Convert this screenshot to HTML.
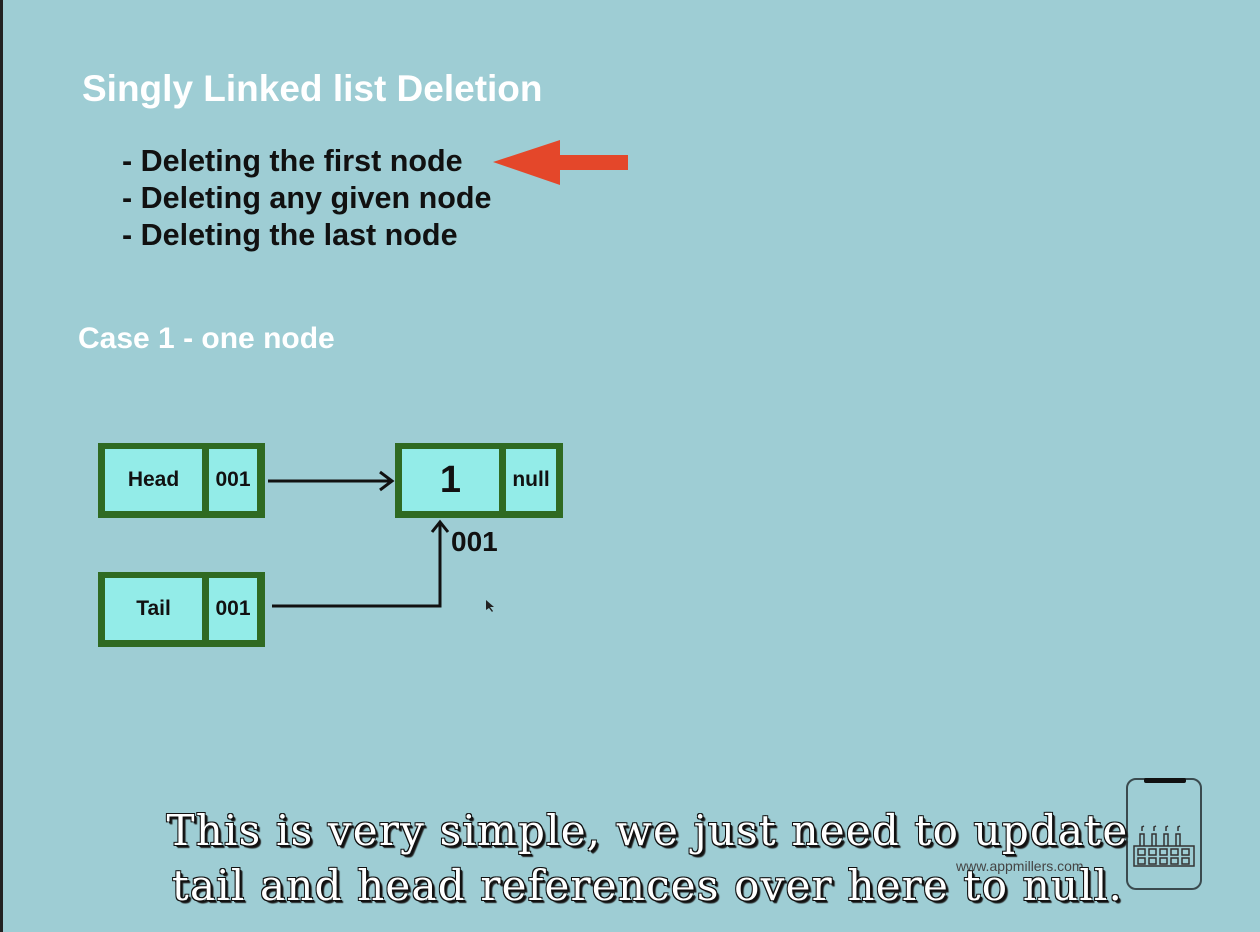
<!DOCTYPE html>
<html><head><meta charset="utf-8"><style>
html,body{margin:0;padding:0}
body{width:1260px;height:932px;background:#9ecdd4;position:relative;overflow:hidden;font-family:"Liberation Sans",Arial,sans-serif}
.t{position:absolute;font-weight:bold;white-space:nowrap}
.box{position:absolute;background:#2f6a22;}
.cell{position:absolute;background:#93ece8;display:flex;align-items:center;justify-content:center;font-weight:bold;color:#111;font-size:21px}
.sub{position:absolute;left:0;width:1295px;text-align:center;font-family:"DejaVu Serif","Liberation Serif",serif;font-size:42px;color:#fff;white-space:nowrap;letter-spacing:1.2px;
text-shadow:2px 2px 0 #111,-1px -1px 0 #111,1px -1px 0 #111,-1px 1px 0 #111,3px 3px 1px #222}
</style></head><body>
<div style="position:absolute;left:0;top:0;width:3px;height:932px;background:#222"></div>
<div class="t" style="left:82px;top:68px;font-size:37px;color:#fff">Singly Linked list Deletion</div>
<div class="t" style="left:122px;top:143px;font-size:30.5px;color:#111;line-height:37px">- Deleting the first node<br>- Deleting any given node<br>- Deleting the last node</div>
<div class="t" style="left:78px;top:322px;font-size:30px;color:#fff">Case 1 - one node</div>
<svg style="position:absolute;left:0;top:0" width="1260" height="932">
<polygon points="493,162 560,140 560,155 628,155 628,170 560,170 560,185" fill="#e4472a"/>
<g stroke="#111" stroke-width="3" fill="none">
<line x1="268" y1="481" x2="392" y2="481"/><polyline points="380,472 392,481 380,490"/>
<polyline points="272,606 440,606 440,522"/><polyline points="432,532 440,522 448,532"/>
</g>
<polygon points="486,600 486,610 489,608 492,612 493,611 490,607 494,607" fill="#222"/>
</svg>
<div class="box" style="left:98px;top:443px;width:167px;height:75px"></div>
<div class="cell" style="left:105px;top:449px;width:97px;height:62px">Head</div>
<div class="cell" style="left:209px;top:449px;width:48px;height:62px">001</div>
<div class="box" style="left:98px;top:572px;width:167px;height:75px"></div>
<div class="cell" style="left:105px;top:578px;width:97px;height:62px">Tail</div>
<div class="cell" style="left:209px;top:578px;width:48px;height:62px">001</div>
<div class="box" style="left:395px;top:443px;width:168px;height:75px"></div>
<div class="cell" style="left:402px;top:449px;width:97px;height:62px;font-size:38px">1</div>
<div class="cell" style="left:506px;top:449px;width:50px;height:62px">null</div>
<div class="t" style="left:451px;top:526px;font-size:28px;color:#111">001</div>
<div style="position:absolute;left:1126px;top:778px;width:76px;height:112px;border:2px solid #3a4a4e;border-radius:10px;box-sizing:border-box"></div>
<div style="position:absolute;left:1144px;top:778px;width:42px;height:5px;background:#111;border-radius:2px"></div>
<svg style="position:absolute;left:1130px;top:820px" width="70" height="50" fill="none" stroke="#333" stroke-width="1.5">
<rect x="4" y="26" width="60" height="20"/>
<g><rect x="8" y="29" width="7" height="6"/><rect x="19" y="29" width="7" height="6"/><rect x="30" y="29" width="7" height="6"/><rect x="41" y="29" width="7" height="6"/><rect x="52" y="29" width="7" height="6"/>
<rect x="8" y="38" width="7" height="6"/><rect x="19" y="38" width="7" height="6"/><rect x="30" y="38" width="7" height="6"/><rect x="41" y="38" width="7" height="6"/><rect x="52" y="38" width="7" height="6"/></g>
<path d="M10 26V14h4v12M22 26V14h4v12M34 26V14h4v12M46 26V14h4v12M12 11v-4l2-1M24 11v-4l2-1M36 11v-4l2-1M48 11v-4l2-1"/>
</svg>
<div class="t" style="left:956px;top:858px;font-size:14px;color:#444;font-weight:normal">www.appmillers.com</div>
<div class="sub" style="top:806px">This is very simple, we just need to update</div>
<div class="sub" style="top:861px">tail and head references over here to null.</div>
</body></html>
